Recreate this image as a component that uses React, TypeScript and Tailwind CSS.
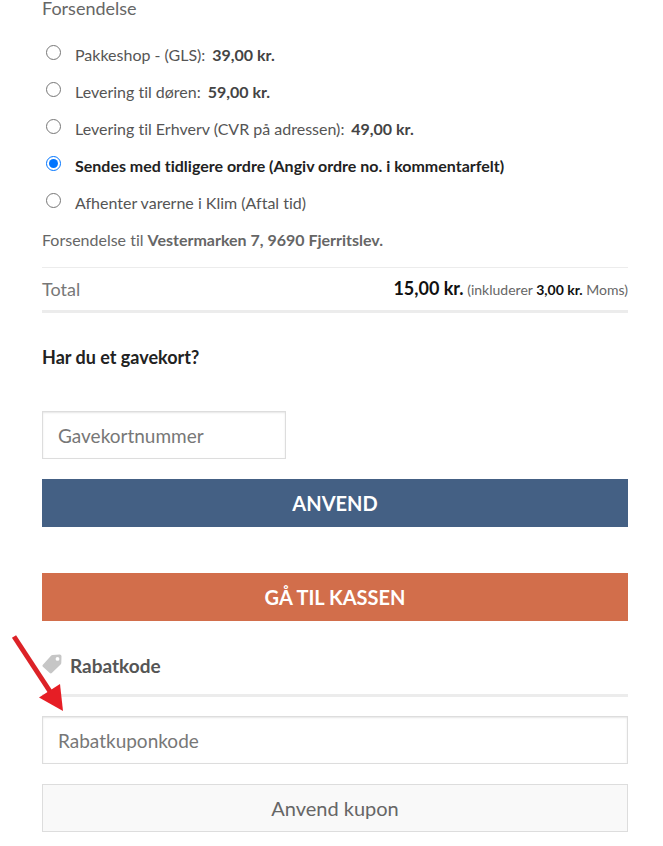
import { useState } from "react";

const shippingMethods = [
    { id: "gls", label: "Pakkeshop - (GLS):", price: "39,00 kr." },
    { id: "home", label: "Levering til døren:", price: "59,00 kr." },
    { id: "business", label: "Levering til Erhverv (CVR på adressen):", price: "49,00 kr." },
    { id: "previous", label: "Sendes med tidligere ordre (Angiv ordre no. i kommentarfelt)" },
    { id: "pickup", label: "Afhenter varerne i Klim (Aftal tid)" },
];

const inputStyle =
    "block h-12 border border-[#dddddd] bg-white px-[15px] text-[19px] text-[#333333] shadow-[inset_0_1px_2px_rgba(0,0,0,0.1)] outline-none placeholder:text-[#777777]";

function TagIcon() {
    return (
        <svg viewBox="0 0 20 20" className="mb-1 h-5 w-5 shrink-0 fill-[#c6c6c6]" aria-hidden="true">
            <path
                fillRule="evenodd"
                d="M10.600 1 17.500.6c1.200-.1 2 .7 2 1.900l-.2 6.200c0 .7-.2 1.200-.7 1.700l-8.800 8.600c-.6.6-1.400.6-2 0L.9 12.800c-.6-.6-.6-1.400 0-2L9 1.700c.4-.4.9-.7 1.600-.7ZM15.500 3a1.900 1.900 0 1 0 0 3.800 1.900 1.900 0 0 0 0-3.800Z"
            />
        </svg>
    );
}

export default function App() {
    const [method, setMethod] = useState("previous");

    return (
        <main className="relative bg-white pb-3 pl-[42px] pr-[35px] font-['Lato',sans-serif] text-[#666666] [font-variant-ligatures:none]">
            {/* Shipping */}
            <section>
                <h2 className="text-lg leading-4">Forsendelse</h2>
                <ul className="mt-5">
                    {shippingMethods.map(({ id, label, price }) => (
                        <li key={id} className="flex h-[37px] items-center pl-1">
                            <input
                                type="radio"
                                name="shipping"
                                id={id}
                                checked={method === id}
                                onChange={() => setMethod(id)}
                                className="mb-1 h-[15px] w-[15px] shrink-0 accent-[#0075ff]"
                            />
                            <label
                                htmlFor={id}
                                className={
                                    method === id
                                        ? "pl-[14px] text-base font-bold text-[#222222]"
                                        : "pl-[14px] text-base text-[#555555]"
                                }
                            >
                                {label}
                                {price && <strong className="ml-[3px] font-bold text-[#444444]"> {price}</strong>}
                            </label>
                        </li>
                    ))}
                </ul>
                <p className="pb-[15px] pt-[7px] text-base">
                    Forsendelse til <strong>Vestermarken 7, 9690 Fjerritslev.</strong>
                </p>
            </section>

            {/* Total */}
            <table className="w-full border-collapse">
                <tbody>
                    <tr className="border-b-[3px] border-t border-b-[#ececec] border-t-[#ececec]">
                        <th scope="row" className="h-11 text-left text-lg font-normal text-[#777777]">
                            Total
                        </th>
                        <td className="pb-0.5 text-right text-sm">
                            <strong className="text-lg text-[#111111]">15,00 kr.</strong> (inkluderer{" "}
                            <strong className="text-[#111111]">3,00 kr.</strong> Moms)
                        </td>
                    </tr>
                </tbody>
            </table>

            {/* Gift card */}
            <form onSubmit={(e) => e.preventDefault()} className="mt-[30px]">
                <label htmlFor="giftcard" className="block text-lg font-bold text-[#222222]">
                    Har du et gavekort?
                </label>
                <input
                    id="giftcard"
                    type="text"
                    placeholder="Gavekortnummer"
                    className={`${inputStyle} mt-10 w-[244px]`}
                />
                <button type="submit" className="mt-5 h-12 w-full bg-[#446084] text-xl font-bold text-white">
                    ANVEND
                </button>
            </form>

            <a
                href="#checkout"
                className="mt-[46px] flex h-12 items-center justify-center bg-[#d26e4b] text-xl font-bold text-white"
            >
                GÅ TIL KASSEN
            </a>

            {/* Coupon */}
            <form onSubmit={(e) => e.preventDefault()} className="mt-[31px]">
                <label
                    htmlFor="coupon"
                    className="flex items-center gap-2 border-b-[3px] border-[#ececec] pb-[14px] text-[19px] font-bold leading-7 text-[#555555]"
                >
                    <TagIcon />
                    Rabatkode
                </label>
                <input id="coupon" type="text" placeholder="Rabatkuponkode" className={`${inputStyle} mt-[19px] w-full`} />
                <button
                    type="submit"
                    className="mt-5 h-12 w-full border border-[#dddddd] bg-[#f9f9f9] text-xl text-[#666666]"
                >
                    Anvend kupon
                </button>
            </form>

            {/* Pointer to the coupon field */}
            <svg
                viewBox="0 0 54 78"
                className="pointer-events-none absolute left-[11px] top-[634px] h-[78px] w-[54px]"
                aria-hidden="true"
            >
                <path d="M3 2.500 40 59" stroke="#dc2227" strokeWidth="5" fill="none" />
                <path d="M52 77 28 63.500 49 50Z" fill="#e61e25" />
            </svg>
        </main>
    );
}
